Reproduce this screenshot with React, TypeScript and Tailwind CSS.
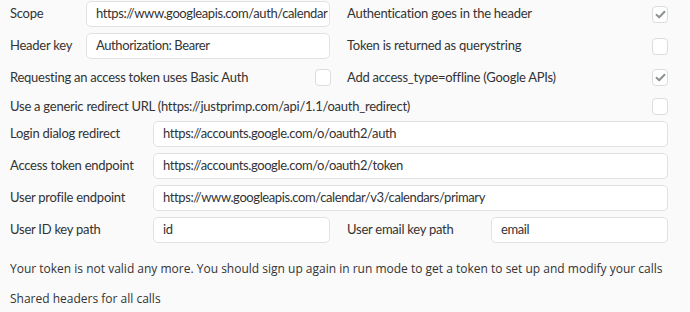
import React from 'react'

function Field({ value, className = '' }: { value: string; className?: string }) {
  return (
    <div
      className={`h-[26px] flex items-center bg-white border border-[#e2e2e2] rounded-[5px] pl-[9px] tracking-[-0.4px] whitespace-nowrap overflow-hidden ${className}`}
    >
      {value}
    </div>
  )
}

function Check({ checked = false }: { checked?: boolean }) {
  return (
    <div className="w-[16px] h-[17px] shrink-0 bg-white border border-[#dcdcdc] rounded-[4px] flex items-center justify-center">
      {checked && (
        <svg width="11" height="9" viewBox="0 0 11 9" fill="none">
          <path d="M1.5 4.8 L4.2 7.2 L9.5 1.8" stroke="#8c9194" strokeWidth="2" strokeLinecap="round" strokeLinejoin="round" />
        </svg>
      )}
    </div>
  )
}

export default function App() {
  return (
    <div className="w-[690px] h-[312px] bg-[#fafafa] pl-[10px] pr-[22px] pt-[1px] text-[13px] tracking-[-0.25px] text-[#333] font-['Lato','Liberation_Sans',sans-serif] overflow-hidden">
      {/* scope / auth header */}
      <div className="flex items-center h-[26px]">
        <div className="w-[320px] flex items-center">
          <span className="w-[76px] shrink-0">Scope</span>
          <Field value="https://www.googleapis.com/auth/calendar" className="flex-1" />
        </div>
        <div className="ml-[17px] flex-1 flex items-center justify-between">
          <span>Authentication goes in the header</span>
          <Check checked />
        </div>
      </div>

      <div className="flex items-center h-[26px] mt-[6px]">
        <div className="w-[320px] flex items-center">
          <span className="w-[76px] shrink-0">Header key</span>
          <Field value="Authorization: Bearer" className="flex-1" />
        </div>
        <div className="ml-[17px] flex-1 flex items-center justify-between">
          <span>Token is returned as querystring</span>
          <Check />
        </div>
      </div>

      <div className="flex items-center h-[17px] mt-[10px]">
        <div className="w-[321px] flex items-center justify-between">
          <span>Requesting an access token uses Basic Auth</span>
          <Check />
        </div>
        <div className="ml-[16px] flex-1 flex items-center justify-between">
          <span>Add access_type=offline (Google APIs)</span>
          <Check checked />
        </div>
      </div>

      <div className="flex items-center justify-between h-[17px] mt-[12px]">
        <span>Use a generic redirect URL (https://justprimp.com/api/1.1/oauth_redirect)</span>
        <Check />
      </div>

      {/* endpoints */}
      <div className="flex items-center mt-[6px]">
        <span className="w-[143px] shrink-0">Login dialog redirect</span>
        <Field value="https://accounts.google.com/o/oauth2/auth" className="flex-1" />
      </div>
      <div className="flex items-center mt-[6px]">
        <span className="w-[143px] shrink-0">Access token endpoint</span>
        <Field value="https://accounts.google.com/o/oauth2/token" className="flex-1" />
      </div>
      <div className="flex items-center mt-[6px]">
        <span className="w-[143px] shrink-0">User profile endpoint</span>
        <Field value="https://www.googleapis.com/calendar/v3/calendars/primary" className="flex-1" />
      </div>

      <div className="flex items-center mt-[6px]">
        <div className="w-[320px] flex items-center">
          <span className="w-[143px] shrink-0">User ID key path</span>
          <Field value="id" className="flex-1" />
        </div>
        <div className="ml-[17px] flex-1 flex items-center">
          <span className="w-[144px] shrink-0">User email key path</span>
          <Field value="email" className="flex-1" />
        </div>
      </div>

      <p className="mt-[17px] leading-[18px] text-[12px] tracking-normal font-['Open_Sans',sans-serif]">
        Your token is not valid any more. You should sign up again in run mode to get a token to set up and modify your calls
      </p>
      <p className="mt-[12px] leading-[18px] text-[12px] tracking-normal font-['Open_Sans',sans-serif]">
        Shared headers for all calls
      </p>
    </div>
  )
}
